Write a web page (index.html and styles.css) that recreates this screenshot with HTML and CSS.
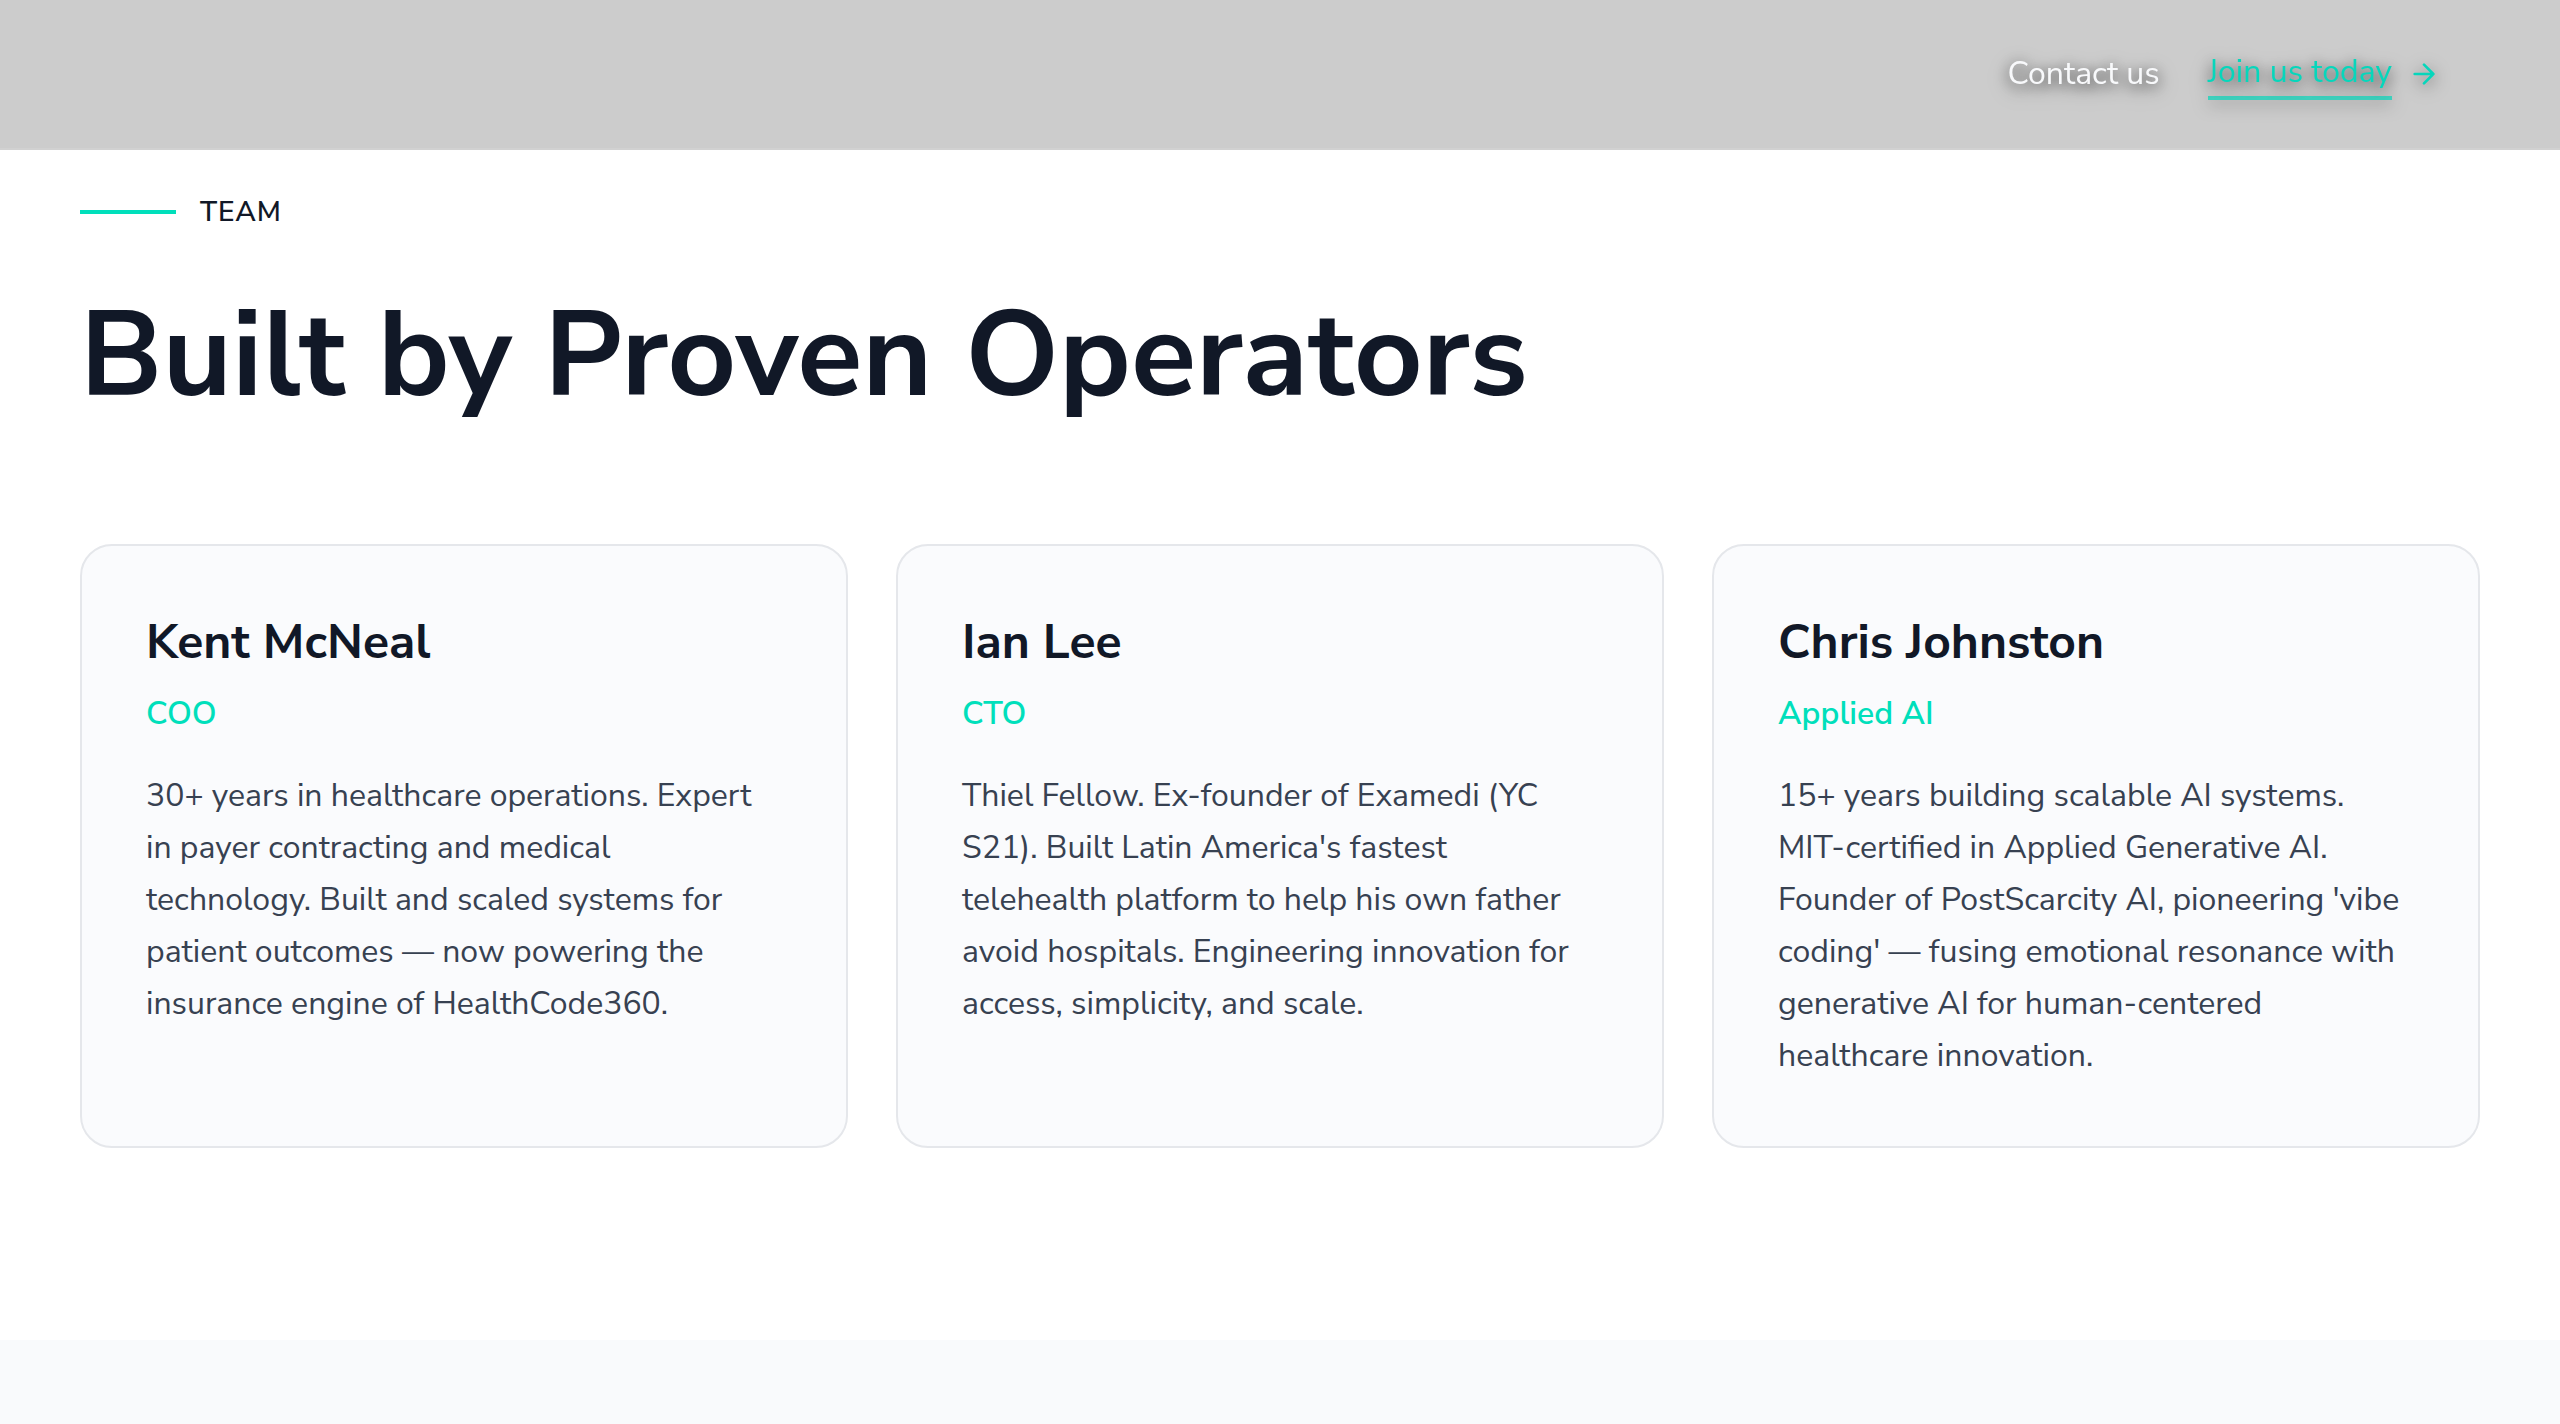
FILE: index.html
```html
<!DOCTYPE html>
<html lang="en">
<head>
<meta charset="utf-8">
<meta name="viewport" content="width=device-width, initial-scale=1">
<title>Team</title>
<link rel="stylesheet" href="styles.css">
</head>
<body>
<header class="topbar">
  <nav class="nav">
    <a class="nav-link" href="#contact">Contact us</a>
    <a class="nav-cta" href="#join">
      <span class="nav-cta-label">Join us today</span>
      <svg class="nav-cta-icon" viewBox="0 0 24 24" fill="none" stroke="currentColor" stroke-width="2" stroke-linecap="round" stroke-linejoin="round" aria-hidden="true"><path d="M5 12h14M12 5l7 7-7 7"/></svg>
    </a>
  </nav>
</header>
<main>
  <section class="team">
    <p class="eyebrow">TEAM</p>
    <h1 class="title">Built by Proven Operators</h1>
    <div class="cards">
      <article class="card">
        <h2 class="name">Kent McNeal</h2>
        <p class="role">COO</p>
        <p class="bio">30+ years in healthcare operations. Expert in payer contracting and medical technology. Built and scaled systems for patient outcomes — now powering the insurance engine of HealthCode360.</p>
      </article>
      <article class="card">
        <h2 class="name">Ian Lee</h2>
        <p class="role">CTO</p>
        <p class="bio">Thiel Fellow. Ex-founder of Examedi (YC S21). Built Latin America's fastest telehealth platform to help his own father avoid hospitals. Engineering innovation for access, simplicity, and scale.</p>
      </article>
      <article class="card">
        <h2 class="name">Chris Johnston</h2>
        <p class="role">Applied AI</p>
        <p class="bio">15+ years building scalable AI systems. MIT-certified in Applied Generative AI. Founder of PostScarcity AI, pioneering 'vibe coding' — fusing emotional resonance with generative AI for human-centered healthcare innovation.</p>
      </article>
    </div>
  </section>
</main>
</body>
</html>
```
FILE: styles.css
```css
* {
  box-sizing: border-box;
  margin: 0;
}

body {
  min-height: 100vh;
  background: #f9fafc;
  color: #111827;
  font-family: "Nunito Sans", Nunito, Lato, "Open Sans", sans-serif;
  font-size: 32px;
  line-height: 48px;
}

.topbar {
  padding: 48px 120px;
  background: #cccccc;
  border-bottom: 2px solid #d1d1d1;
}

.nav {
  display: flex;
  justify-content: flex-end;
  align-items: center;
  gap: 48px;
}

.nav-link,
.nav-cta {
  line-height: 40px;
  text-decoration: none;
  text-shadow: 0 2px 16px rgba(0, 0, 0, 0.4);
  filter: drop-shadow(0 4px 8px rgba(0, 0, 0, 0.5));
}

.nav-link {
  color: #f8f9fb;
}

.nav-cta {
  display: flex;
  align-items: center;
  gap: 16px;
  color: #06d6bb;
}

.nav-cta-label {
  padding: 4px 0;
  border-bottom: 4px solid rgba(6, 214, 187, 0.7);
}

.nav-cta-icon {
  width: 32px;
  height: 32px;
}

.team {
  padding: 42px 80px 192px;
  background: #ffffff;
}

.eyebrow {
  display: flex;
  align-items: center;
  gap: 24px;
  margin-bottom: 64px;
  font-size: 28px;
  font-weight: 600;
  line-height: 40px;
  letter-spacing: 1px;
}

.eyebrow::before {
  content: "";
  width: 96px;
  height: 4px;
  background: #00dfbb;
}

.title {
  margin-bottom: 128px;
  font-size: 120px;
  font-weight: 700;
  line-height: 120px;
}

.cards {
  display: grid;
  grid-template-columns: repeat(3, 1fr);
  gap: 48px;
}

.card {
  padding: 64px;
  background: #fafbfd;
  border: 2px solid #e5e7eb;
  border-radius: 32px;
}

.name {
  margin-bottom: 16px;
  font-size: 48px;
  font-weight: 700;
  line-height: 64px;
}

.role {
  margin-bottom: 32px;
  color: #00dfbb;
  font-weight: 600;
}

.bio {
  color: #374151;
  line-height: 52px;
}
```
